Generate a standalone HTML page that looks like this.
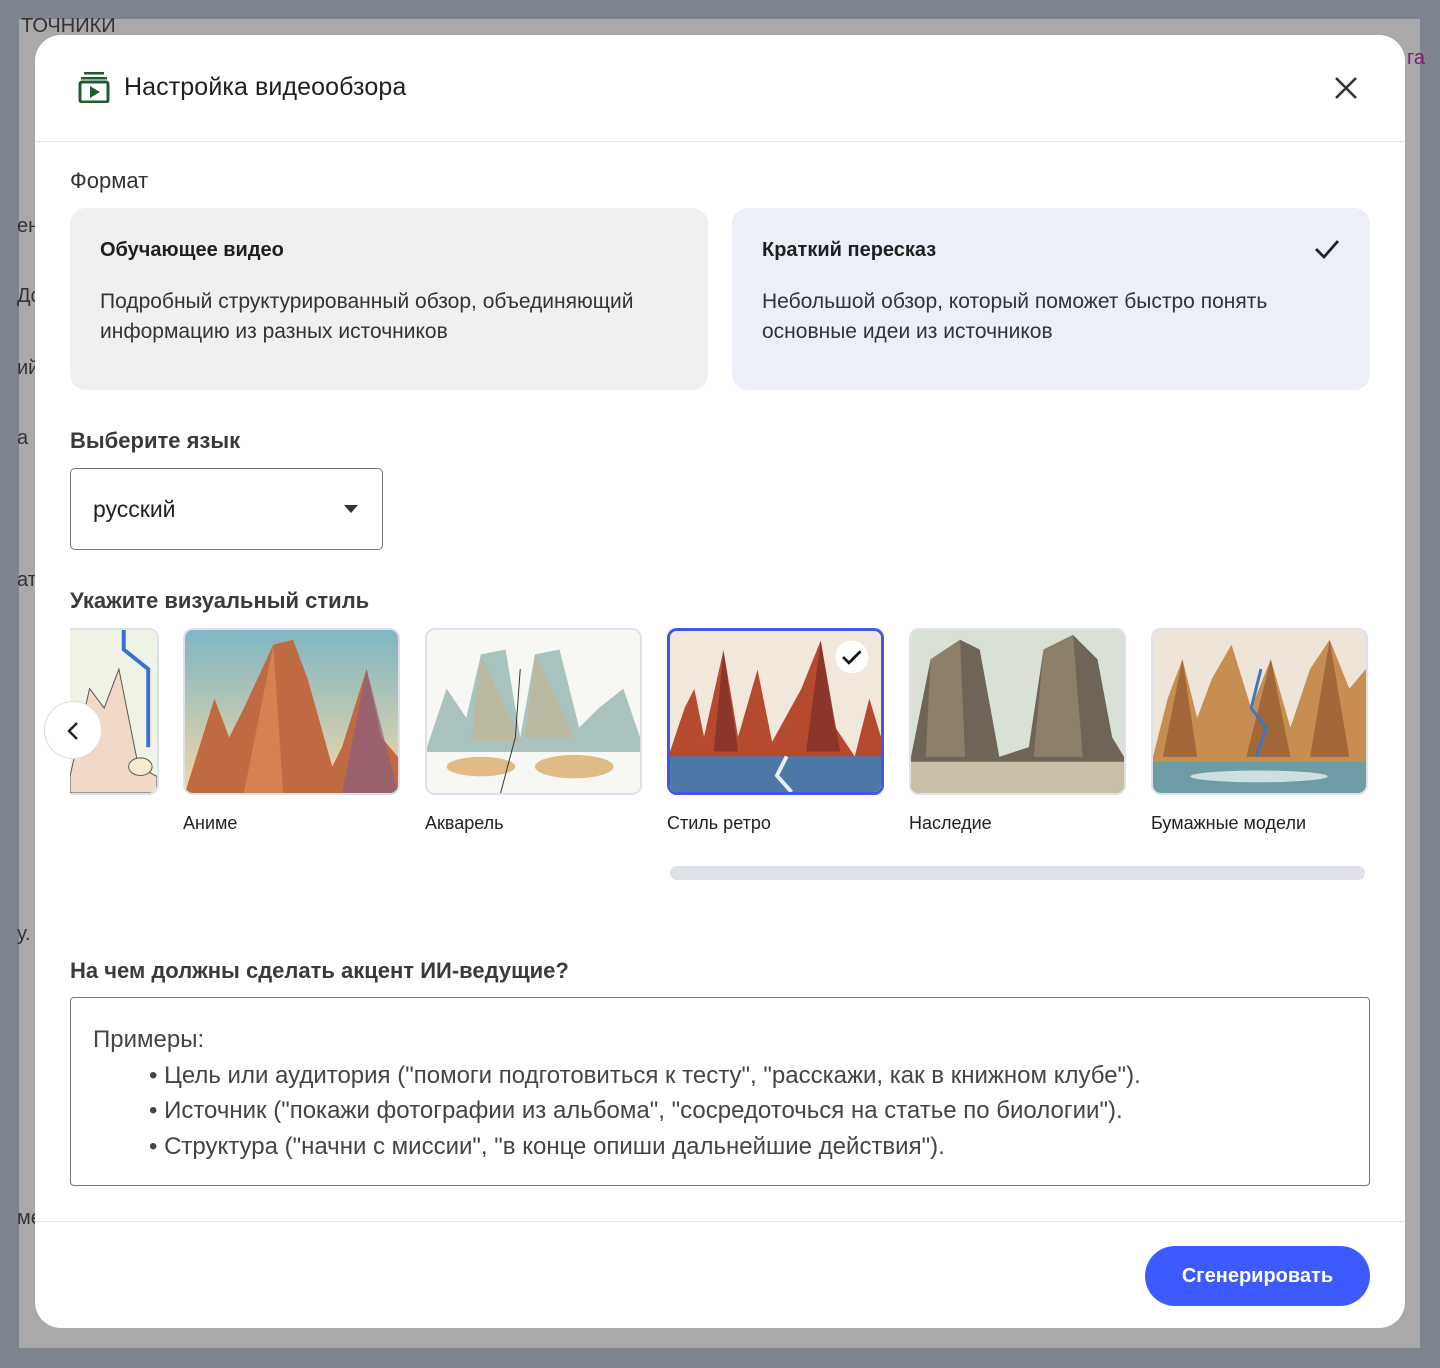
<!DOCTYPE html>
<html><head><meta charset="utf-8"><style>
*{box-sizing:border-box;margin:0;padding:0}
body{width:1440px;height:1368px;background:#7e848d;font-family:"Liberation Sans",sans-serif;position:relative;overflow:hidden;color:#1f1f1f}
.page{position:absolute;left:19px;top:19px;width:1401px;height:1329px;background:#a9a9ab}
.bgt{position:absolute;font-size:20px;color:#333}
.modal{position:absolute;left:35px;top:35px;width:1370px;height:1293px;background:#fff;border-radius:26px;overflow:hidden}
.hdr{height:107px;border-bottom:1px solid #e3e3e3;position:relative}
.hdr h1{position:absolute;left:89px;top:38px;font-size:25px;font-weight:normal;color:#1f1f1f;letter-spacing:.1px}
.sec{position:absolute;left:35px;font-size:22px;color:#3a3a3a;font-weight:bold}
.card{position:absolute;top:173px;width:638px;height:182px;border-radius:16px;background:#f0f0f0;padding:31px 30px}
.card b{display:block;font-size:20px;color:#1f1f1f;margin-bottom:25px}
.card p{font-size:21px;line-height:30px;color:#333}
.sel{position:absolute;left:35px;top:433px;width:313px;height:82px;border:1.5px solid #777;border-radius:5px;font-size:23px;padding:27px 22px;color:#222}
.thumb{position:absolute;top:593px;width:217px;height:167px;border-radius:10px;border:2px solid #dfe1ea;overflow:hidden}
.thumb svg{display:block;width:100%;height:100%}
.lbl{position:absolute;top:778px;font-size:18px;color:#222}
.ta{position:absolute;left:35px;top:962px;width:1300px;height:189px;border:1.5px solid #777;border-radius:4px;padding:24px 22px;font-size:24px;color:#444;line-height:35.5px}
.ta div{padding-left:56px}
.btn{position:absolute;left:1110px;top:1211px;width:225px;height:60px;border-radius:30px;background:#3d5afe;color:#fff;font-size:20px;font-weight:bold;text-align:center;line-height:60px}
</style></head><body>
<div class="page">
<div class="bgt" style="left:2px;top:-4px">ТОЧНИКИ</div>
<div class="bgt" style="left:-2px;top:196px">ен</div>
<div class="bgt" style="left:-2px;top:266px">Дс</div>
<div class="bgt" style="left:-2px;top:338px">ий</div>
<div class="bgt" style="left:-2px;top:408px">а</div>
<div class="bgt" style="left:-2px;top:550px">ат</div>
<div class="bgt" style="left:-2px;top:904px">у.</div>
<div class="bgt" style="left:-2px;top:1188px">ме</div>
<div class="bgt" style="left:1388px;top:28px;color:#7b1c6e">га</div>
</div>
<div class="modal">
<div class="hdr">
<svg style="position:absolute;left:43px;top:36px" width="32" height="32" viewBox="0 0 32 32"><rect x="6" y="1" width="20" height="2.5" fill="#1e5e2e"/><rect x="3" y="6" width="26" height="2.5" fill="#1e5e2e"/><rect x="2" y="11" width="28" height="20" rx="2" fill="none" stroke="#1e5e2e" stroke-width="3"/><path d="M12 15v12l10-6z" fill="#1e5e2e"/></svg>
<h1>Настройка видеообзора</h1>
<svg style="position:absolute;left:1299px;top:41px" width="24" height="24" viewBox="0 0 24 24"><path d="M2 2L22 22M22 2L2 22" stroke="#333" stroke-width="2.6"/></svg>
</div>
<div class="sec" style="top:133px;font-weight:normal;color:#333">Формат</div>
<div class="card" style="left:35px"><b>Обучающее видео</b><p>Подробный структурированный обзор, объединяющий<br>информацию из разных источников</p></div>
<div class="card" style="left:697px;background:#eceef8"><b>Краткий пересказ</b><p>Небольшой обзор, который поможет быстро понять<br>основные идеи из источников</p>
<svg style="position:absolute;left:582px;top:30px" width="26" height="22" viewBox="0 0 26 22"><path d="M2 11l8 8L24 3" fill="none" stroke="#222" stroke-width="2.8"/></svg></div>
<div class="sec" style="top:393px">Выберите язык</div>
<div class="sel">русский<svg style="position:absolute;left:273px;top:36px" width="14" height="8"><path d="M0 0h14L7 8z" fill="#333"/></svg></div>
<div class="sec" style="top:553px">Укажите визуальный стиль</div>

<div class="thumb" style="left:35px;width:89px;border-left:none;border-radius:0 10px 10px 0"><svg viewBox="0 0 89 167" preserveAspectRatio="none"><rect width="89" height="167" fill="#eef3e6"/><path d="M0 150L20 60 35 80 50 40 70 140 89 150V167H0z" fill="#f1d9c8" stroke="#555"/><path d="M55 0v20l25 20v80" fill="none" stroke="#3a6fd8" stroke-width="4"/><ellipse cx="72" cy="140" rx="12" ry="9" fill="#f5edd0" stroke="#555"/></svg></div>
<div class="thumb" style="left:148px"><svg viewBox="0 0 217 167" preserveAspectRatio="none"><defs><linearGradient id="a" x1="0" y1="0" x2="0" y2="1"><stop offset="0" stop-color="#7fb6c4"/><stop offset="1" stop-color="#f2d7a6"/></linearGradient></defs><rect width="217" height="167" fill="url(#a)"/><path d="M0 167L30 70 45 110 60 80 90 15 110 10 125 50 150 140 160 120 185 40 200 110 217 130V167z" fill="#c06a42"/><path d="M90 15L100 167H60z" fill="#e08c5a" opacity=".7"/><path d="M185 40L217 167H160z" fill="#8a6080" opacity=".7"/></svg></div>
<div class="thumb" style="left:390px"><svg viewBox="0 0 217 167" preserveAspectRatio="none"><rect width="217" height="167" fill="#f7f7f3"/><path d="M0 120L20 60 40 90 55 25 80 20 95 110 110 25 135 20 155 100 175 80 200 60 217 110V125H0z" fill="#a9c3bf"/><path d="M55 25L95 115H45zM110 25L150 110H100z" fill="#c9b28f" opacity=".6"/><ellipse cx="55" cy="140" rx="35" ry="10" fill="#e0bb88"/><ellipse cx="150" cy="140" rx="40" ry="12" fill="#e0bb88"/><path d="M95 40L90 110 75 167" fill="none" stroke="#333"/></svg></div>
<div class="thumb" style="left:632px;border:3px solid #4356e8"><svg viewBox="0 0 217 167" preserveAspectRatio="none"><rect width="217" height="167" fill="#f1e7da"/><path d="M0 125L15 80 25 60 35 110 55 20 70 110 90 40 105 115 135 60 155 10 170 100 190 130 205 70 217 110V135H0z" fill="#b64a2e"/><path d="M55 20L70 125H45zM155 10L175 125H140z" fill="#6e2a24" opacity=".6"/><rect y="130" width="217" height="37" fill="#4d78a8"/><path d="M120 130L110 150 125 167" fill="none" stroke="#e8f0f5" stroke-width="4"/><circle cx="187" cy="27" r="17" fill="#fff"/><path d="M178 27l6 6 12-12" fill="none" stroke="#111" stroke-width="2.8"/></svg></div>
<div class="thumb" style="left:874px"><svg viewBox="0 0 217 167" preserveAspectRatio="none"><rect width="217" height="167" fill="#d9e0d6"/><path d="M0 130L20 30 50 10 70 20 90 130 120 120 135 20 165 5 190 30 205 110 217 130V167H0z" fill="#6e6558"/><path d="M20 30L50 10 55 130H15zM135 20L165 5 175 130H125z" fill="#9a8c73" opacity=".7"/><rect y="135" width="217" height="32" fill="#c9bea7"/></svg></div>
<div class="thumb" style="left:1116px"><svg viewBox="0 0 217 167" preserveAspectRatio="none"><rect width="217" height="167" fill="#eee4d8"/><path d="M0 130L15 70 30 30 45 90 60 50 80 15 100 80 120 30 140 100 160 40 180 10 200 60 217 40V140H0z" fill="#c78e52"/><path d="M30 30L45 130H10zM120 30L140 130H95zM180 10L200 130H160z" fill="#8b4f2b" opacity=".6"/><path d="M110 40L100 80 115 100 105 130" fill="none" stroke="#3a78c0" stroke-width="3"/><rect y="135" width="217" height="32" fill="#6d9ca4"/><ellipse cx="108" cy="150" rx="70" ry="6" fill="#cde0df"/></svg></div>
<div style="position:absolute;left:9px;top:666px;width:58px;height:58px;border-radius:50%;background:#fff;border:1px solid #ddd"><svg style="position:absolute;left:21px;top:19px" width="14" height="20"><path d="M11 2L3 10l8 8" fill="none" stroke="#222" stroke-width="2.5"/></svg></div>
<div class="lbl" style="left:148px">Аниме</div>
<div class="lbl" style="left:390px">Акварель</div>
<div class="lbl" style="left:632px">Стиль ретро</div>
<div class="lbl" style="left:874px">Наследие</div>
<div class="lbl" style="left:1116px">Бумажные модели</div>
<div style="position:absolute;left:635px;top:831px;width:695px;height:14px;border-radius:7px;background:#dde1ec"></div>
<div class="sec" style="top:923px">На чем должны сделать акцент ИИ-ведущие?</div>
<div class="ta">Примеры:<div>• Цель или аудитория ("помоги подготовиться к тесту", "расскажи, как в книжном клубе").</div><div>• Источник ("покажи фотографии из альбома", "сосредоточься на статье по биологии").</div><div>• Структура ("начни с миссии", "в конце опиши дальнейшие действия").</div></div>
<div style="position:absolute;left:0;top:1186px;width:1370px;height:1px;background:#e3e3e3"></div>
<div class="btn">Сгенерировать</div>
</div>
</body></html>
